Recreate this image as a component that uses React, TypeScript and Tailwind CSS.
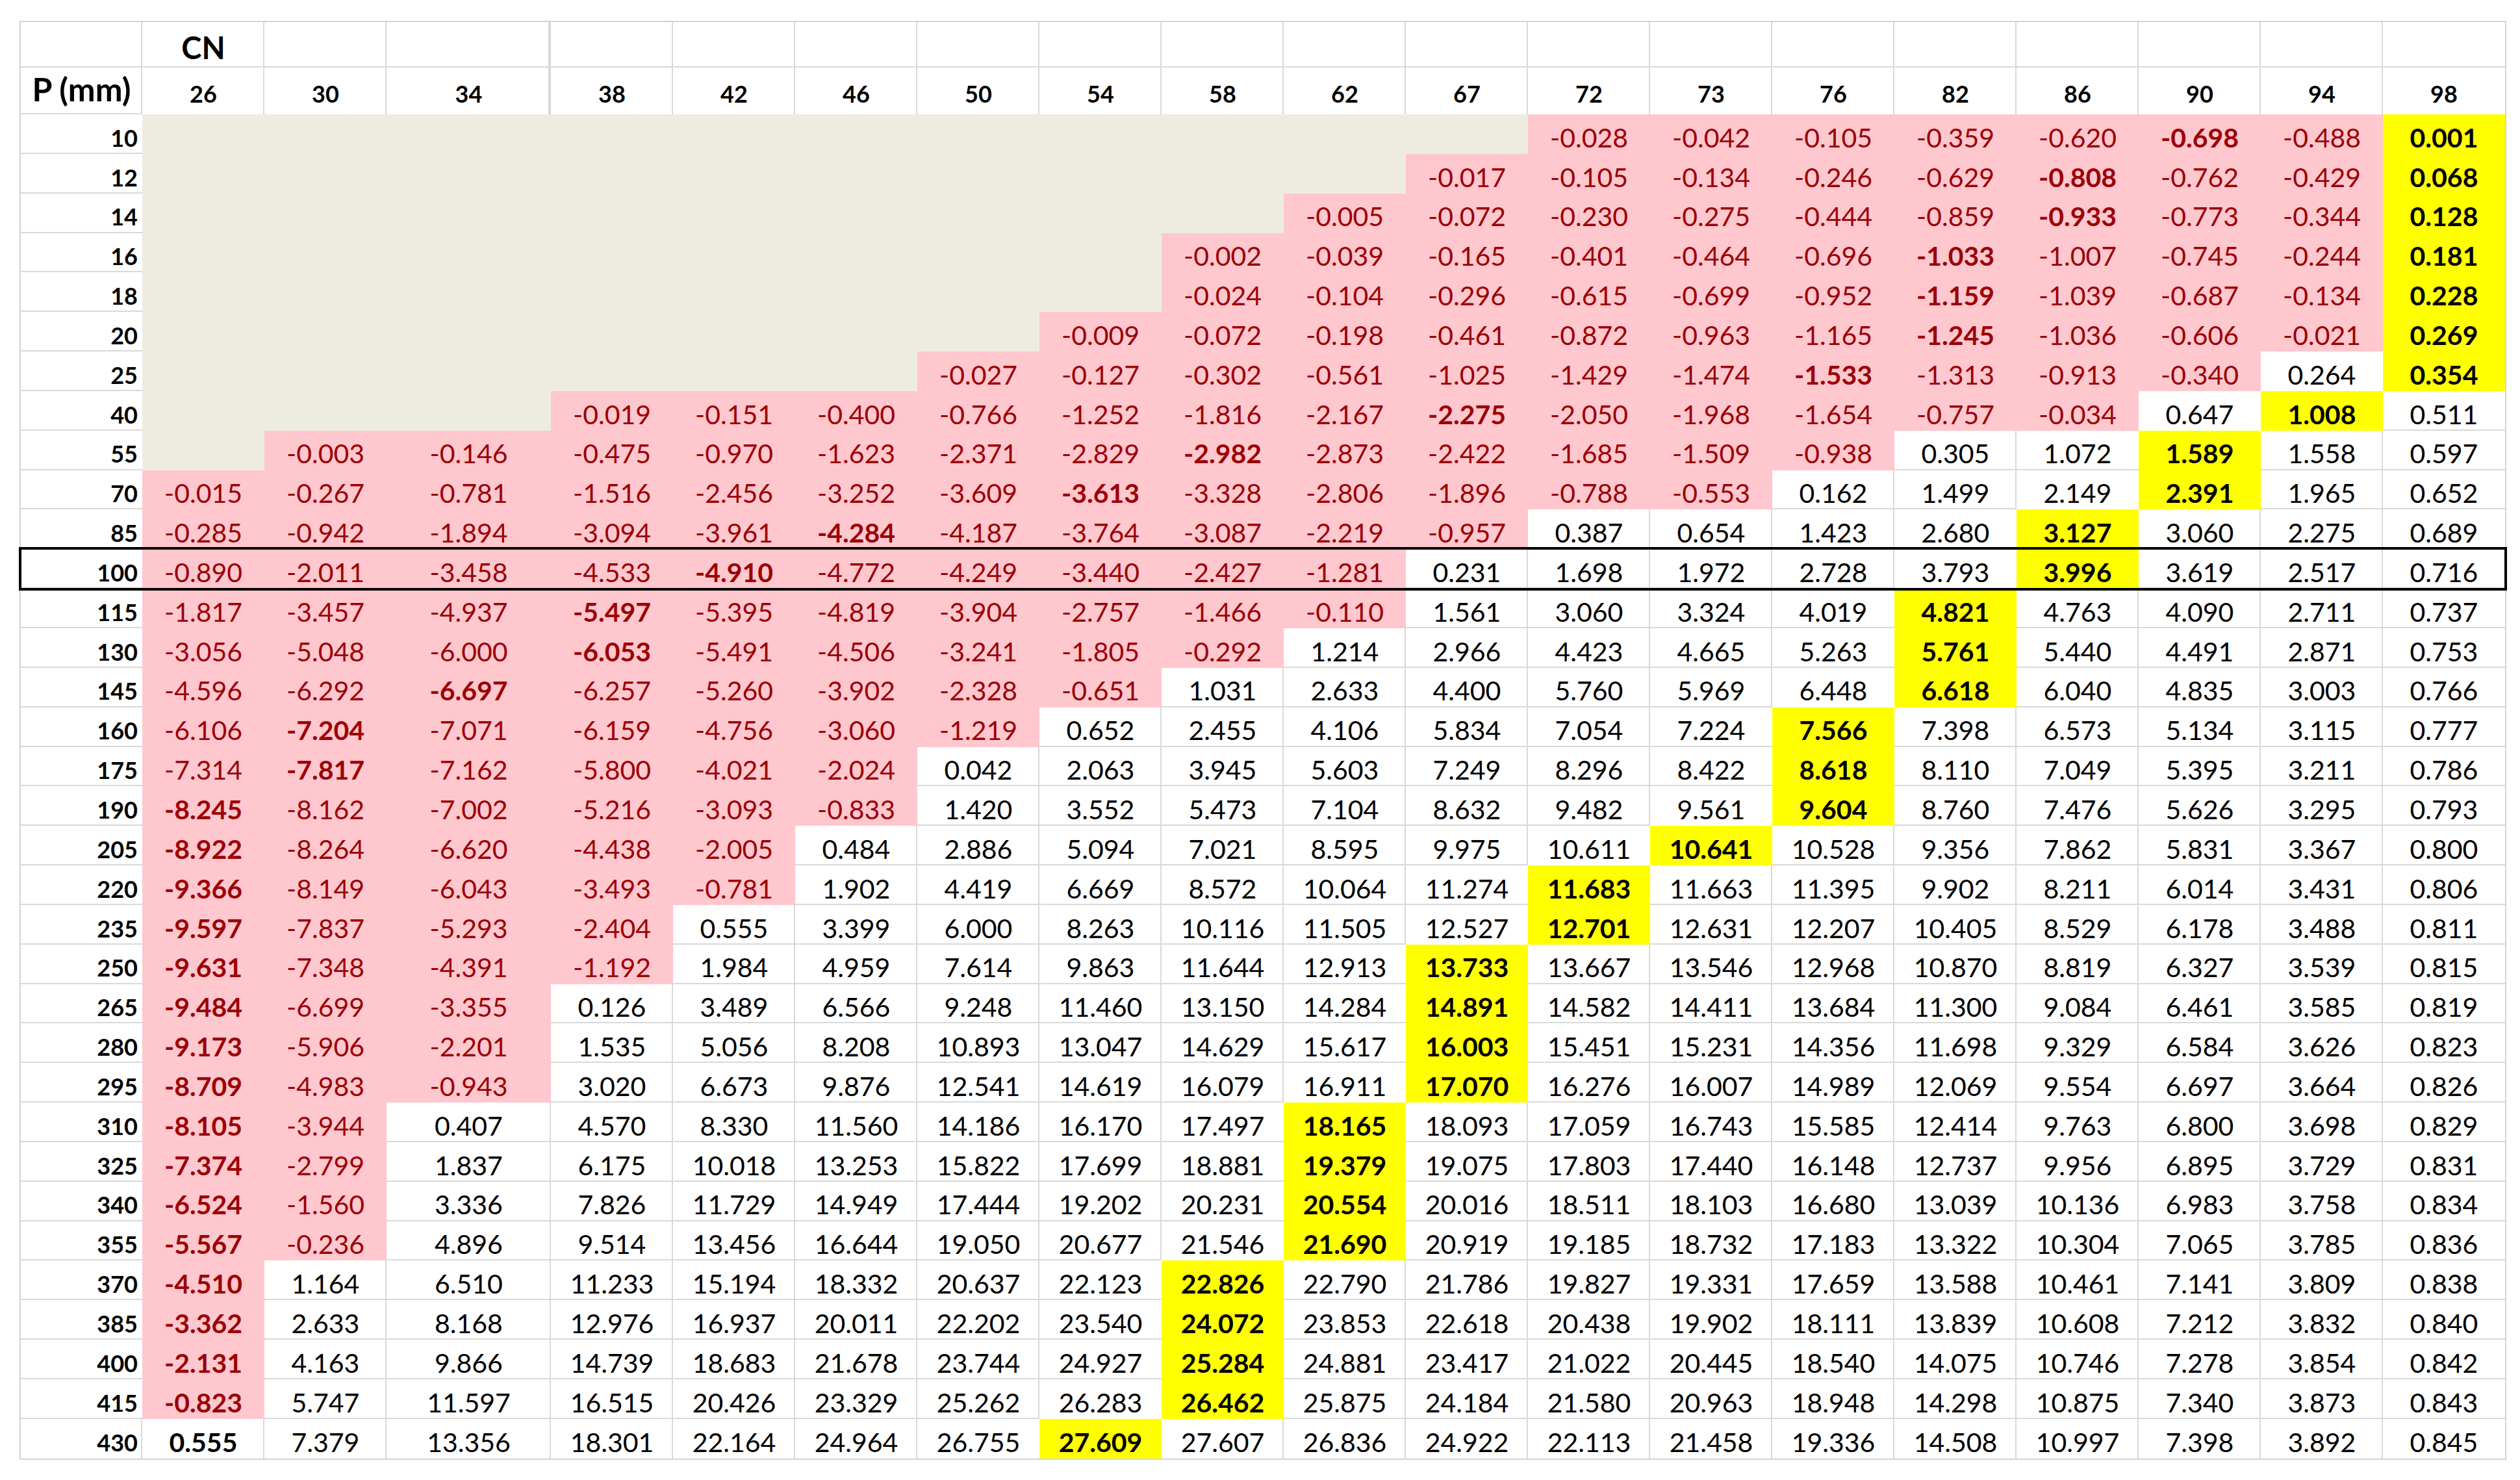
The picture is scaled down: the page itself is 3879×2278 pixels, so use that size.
import React from "react";

const COLS = ["26","30","34","38","42","46","50","54","58","62","67","72","73","76","82","86","90","94","98"];

const RAW: [string, string][] = [
  ["10", "_ _ _ _ _ _ _ _ _ _ _ -0.028 -0.042 -0.105 -0.359 -0.620 -0.698 -0.488 0.001"],
  ["12", "_ _ _ _ _ _ _ _ _ _ -0.017 -0.105 -0.134 -0.246 -0.629 -0.808 -0.762 -0.429 0.068"],
  ["14", "_ _ _ _ _ _ _ _ _ -0.005 -0.072 -0.230 -0.275 -0.444 -0.859 -0.933 -0.773 -0.344 0.128"],
  ["16", "_ _ _ _ _ _ _ _ -0.002 -0.039 -0.165 -0.401 -0.464 -0.696 -1.033 -1.007 -0.745 -0.244 0.181"],
  ["18", "_ _ _ _ _ _ _ _ -0.024 -0.104 -0.296 -0.615 -0.699 -0.952 -1.159 -1.039 -0.687 -0.134 0.228"],
  ["20", "_ _ _ _ _ _ _ -0.009 -0.072 -0.198 -0.461 -0.872 -0.963 -1.165 -1.245 -1.036 -0.606 -0.021 0.269"],
  ["25", "_ _ _ _ _ _ -0.027 -0.127 -0.302 -0.561 -1.025 -1.429 -1.474 -1.533 -1.313 -0.913 -0.340 0.264 0.354"],
  ["40", "_ _ _ -0.019 -0.151 -0.400 -0.766 -1.252 -1.816 -2.167 -2.275 -2.050 -1.968 -1.654 -0.757 -0.034 0.647 1.008 0.511"],
  ["55", "_ -0.003 -0.146 -0.475 -0.970 -1.623 -2.371 -2.829 -2.982 -2.873 -2.422 -1.685 -1.509 -0.938 0.305 1.072 1.589 1.558 0.597"],
  ["70", "-0.015 -0.267 -0.781 -1.516 -2.456 -3.252 -3.609 -3.613 -3.328 -2.806 -1.896 -0.788 -0.553 0.162 1.499 2.149 2.391 1.965 0.652"],
  ["85", "-0.285 -0.942 -1.894 -3.094 -3.961 -4.284 -4.187 -3.764 -3.087 -2.219 -0.957 0.387 0.654 1.423 2.680 3.127 3.060 2.275 0.689"],
  ["100", "-0.890 -2.011 -3.458 -4.533 -4.910 -4.772 -4.249 -3.440 -2.427 -1.281 0.231 1.698 1.972 2.728 3.793 3.996 3.619 2.517 0.716"],
  ["115", "-1.817 -3.457 -4.937 -5.497 -5.395 -4.819 -3.904 -2.757 -1.466 -0.110 1.561 3.060 3.324 4.019 4.821 4.763 4.090 2.711 0.737"],
  ["130", "-3.056 -5.048 -6.000 -6.053 -5.491 -4.506 -3.241 -1.805 -0.292 1.214 2.966 4.423 4.665 5.263 5.761 5.440 4.491 2.871 0.753"],
  ["145", "-4.596 -6.292 -6.697 -6.257 -5.260 -3.902 -2.328 -0.651 1.031 2.633 4.400 5.760 5.969 6.448 6.618 6.040 4.835 3.003 0.766"],
  ["160", "-6.106 -7.204 -7.071 -6.159 -4.756 -3.060 -1.219 0.652 2.455 4.106 5.834 7.054 7.224 7.566 7.398 6.573 5.134 3.115 0.777"],
  ["175", "-7.314 -7.817 -7.162 -5.800 -4.021 -2.024 0.042 2.063 3.945 5.603 7.249 8.296 8.422 8.618 8.110 7.049 5.395 3.211 0.786"],
  ["190", "-8.245 -8.162 -7.002 -5.216 -3.093 -0.833 1.420 3.552 5.473 7.104 8.632 9.482 9.561 9.604 8.760 7.476 5.626 3.295 0.793"],
  ["205", "-8.922 -8.264 -6.620 -4.438 -2.005 0.484 2.886 5.094 7.021 8.595 9.975 10.611 10.641 10.528 9.356 7.862 5.831 3.367 0.800"],
  ["220", "-9.366 -8.149 -6.043 -3.493 -0.781 1.902 4.419 6.669 8.572 10.064 11.274 11.683 11.663 11.395 9.902 8.211 6.014 3.431 0.806"],
  ["235", "-9.597 -7.837 -5.293 -2.404 0.555 3.399 6.000 8.263 10.116 11.505 12.527 12.701 12.631 12.207 10.405 8.529 6.178 3.488 0.811"],
  ["250", "-9.631 -7.348 -4.391 -1.192 1.984 4.959 7.614 9.863 11.644 12.913 13.733 13.667 13.546 12.968 10.870 8.819 6.327 3.539 0.815"],
  ["265", "-9.484 -6.699 -3.355 0.126 3.489 6.566 9.248 11.460 13.150 14.284 14.891 14.582 14.411 13.684 11.300 9.084 6.461 3.585 0.819"],
  ["280", "-9.173 -5.906 -2.201 1.535 5.056 8.208 10.893 13.047 14.629 15.617 16.003 15.451 15.231 14.356 11.698 9.329 6.584 3.626 0.823"],
  ["295", "-8.709 -4.983 -0.943 3.020 6.673 9.876 12.541 14.619 16.079 16.911 17.070 16.276 16.007 14.989 12.069 9.554 6.697 3.664 0.826"],
  ["310", "-8.105 -3.944 0.407 4.570 8.330 11.560 14.186 16.170 17.497 18.165 18.093 17.059 16.743 15.585 12.414 9.763 6.800 3.698 0.829"],
  ["325", "-7.374 -2.799 1.837 6.175 10.018 13.253 15.822 17.699 18.881 19.379 19.075 17.803 17.440 16.148 12.737 9.956 6.895 3.729 0.831"],
  ["340", "-6.524 -1.560 3.336 7.826 11.729 14.949 17.444 19.202 20.231 20.554 20.016 18.511 18.103 16.680 13.039 10.136 6.983 3.758 0.834"],
  ["355", "-5.567 -0.236 4.896 9.514 13.456 16.644 19.050 20.677 21.546 21.690 20.919 19.185 18.732 17.183 13.322 10.304 7.065 3.785 0.836"],
  ["370", "-4.510 1.164 6.510 11.233 15.194 18.332 20.637 22.123 22.826 22.790 21.786 19.827 19.331 17.659 13.588 10.461 7.141 3.809 0.838"],
  ["385", "-3.362 2.633 8.168 12.976 16.937 20.011 22.202 23.540 24.072 23.853 22.618 20.438 19.902 18.111 13.839 10.608 7.212 3.832 0.840"],
  ["400", "-2.131 4.163 9.866 14.739 18.683 21.678 23.744 24.927 25.284 24.881 23.417 21.022 20.445 18.540 14.075 10.746 7.278 3.854 0.842"],
  ["415", "-0.823 5.747 11.597 16.515 20.426 23.329 25.262 26.283 26.462 25.875 24.184 21.580 20.963 18.948 14.298 10.875 7.340 3.873 0.843"],
  ["430", "0.555 7.379 13.356 18.301 22.164 24.964 26.755 27.609 27.607 26.836 24.922 22.113 21.458 19.336 14.508 10.997 7.398 3.892 0.845"],
];

type Kind = "empty" | "neg" | "max" | "pos";
type Cell = { v: string | null; kind: Kind; bold: boolean };

const ROWS: { label: string; cells: Cell[] }[] = RAW.map(([label, s]) => {
  const vals = s.split(" ").map((t) => (t === "_" ? null : t));
  const nums = vals.filter((v): v is string => v !== null).map(Number);
  const mx = Math.max(...nums);
  const mn = Math.min(...nums);
  const cells: Cell[] = vals.map((v) => {
    if (v === null) return { v, kind: "empty", bold: false };
    const n = Number(v);
    if (n === mx) return { v, kind: "max", bold: true };
    if (n < 0) return { v, kind: "neg", bold: n === mn };
    return { v, kind: "pos", bold: n === mn };
  });
  return { label, cells };
});

const colW = (i: number) => (i === 2 ? "w-[253px]" : "w-[188px]");

function shadowFor(right: boolean, bottom: boolean) {
  if (right && bottom) return "shadow-[inset_-2px_-2px_0_#d9d9d9]";
  if (right) return "shadow-[inset_-2px_0_0_#d9d9d9]";
  if (bottom) return "shadow-[inset_0_-2px_0_#d9d9d9]";
  return "";
}

const isWhite = (c: Cell | undefined) => !!c && c.kind === "pos";

export default function App() {
  const nRows = ROWS.length;
  return (
    <div className="min-h-screen bg-white pl-[30px] pt-[32px]" style={{ fontFamily: "Lato, 'Noto Sans', sans-serif" }}>
      <div className="w-max border-2 border-[#d4d4d4] bg-white">
        {/* header row 1 */}
        <div className="flex h-[70px]">
          <div className="w-[187px] shadow-[inset_-2px_-2px_0_#d9d9d9]" />
          {COLS.map((c, i) => (
            <div
              key={c}
              className={`${colW(i)} ${
                i === COLS.length - 1
                  ? "shadow-[inset_0_-2px_0_#d9d9d9]"
                  : i === 2
                  ? "shadow-[inset_-4px_-2px_0_#d9d9d9]"
                  : "shadow-[inset_-2px_-2px_0_#d9d9d9]"
              } flex items-end justify-center pb-[3px] text-[47px] font-bold leading-[1.2] text-black`}
            >
              {i === 0 ? "CN" : ""}
            </div>
          ))}
        </div>
        {/* header row 2 */}
        <div className="flex h-[72px]">
          <div className="flex w-[187px] items-end justify-center pb-[9px] text-[50px] font-bold leading-[1.2] text-black shadow-[inset_-2px_-2px_0_#d9d9d9]">
            P (mm)
          </div>
          {COLS.map((c, i) => (
            <div
              key={c}
              className={`${colW(i)} ${
                i === COLS.length - 1
                  ? ""
                  : i === 2
                  ? "shadow-[inset_-4px_0_0_#d9d9d9]"
                  : "shadow-[inset_-2px_0_0_#d9d9d9]"
              } flex items-end justify-center pb-[10px] text-[36px] font-bold leading-[1.2] text-black`}
            >
              {c}
            </div>
          ))}
        </div>
        {/* data rows */}
        {ROWS.map((row, r) => {
          const last = r === nRows - 1;
          const below = last ? null : ROWS[r + 1];
          const highlight = row.label === "100";
          return (
            <div
              key={row.label}
              className={
                highlight
                  ? "relative z-10 flex h-[60.85px] outline-4 outline-solid outline-black outline-offset-[-1px]"
                  : "flex h-[60.85px]"
              }
            >
              <div
                className={`w-[187px] ${shadowFor(isWhite(row.cells[0]), !last)} flex items-end justify-end pb-[3px] pr-[7px] text-[36px] font-bold leading-[1.2] text-black`}
              >
                {row.label}
              </div>
              {row.cells.map((cell, i) => {
                const lastCol = i === COLS.length - 1;
                const white = cell.kind === "pos";
                const right = white && !lastCol && isWhite(row.cells[i + 1]);
                const bottom = white && !last && isWhite(below?.cells[i]);
                const bg =
                  cell.kind === "empty"
                    ? "bg-[#eeece1]"
                    : cell.kind === "neg"
                    ? "bg-[#ffc7ce] text-[#9c0006]"
                    : cell.kind === "max"
                    ? "bg-[#ffff00] text-black"
                    : "bg-white text-black";
                return (
                  <div
                    key={i}
                    className={`${colW(i)} ${bg} ${shadowFor(right, bottom)} ${
                      cell.bold ? "font-bold" : "font-normal"
                    } flex items-end justify-center pb-[1px] text-[41px] leading-[1.2]`}
                  >
                    {cell.v ?? ""}
                  </div>
                );
              })}
            </div>
          );
        })}
      </div>
    </div>
  );
}
